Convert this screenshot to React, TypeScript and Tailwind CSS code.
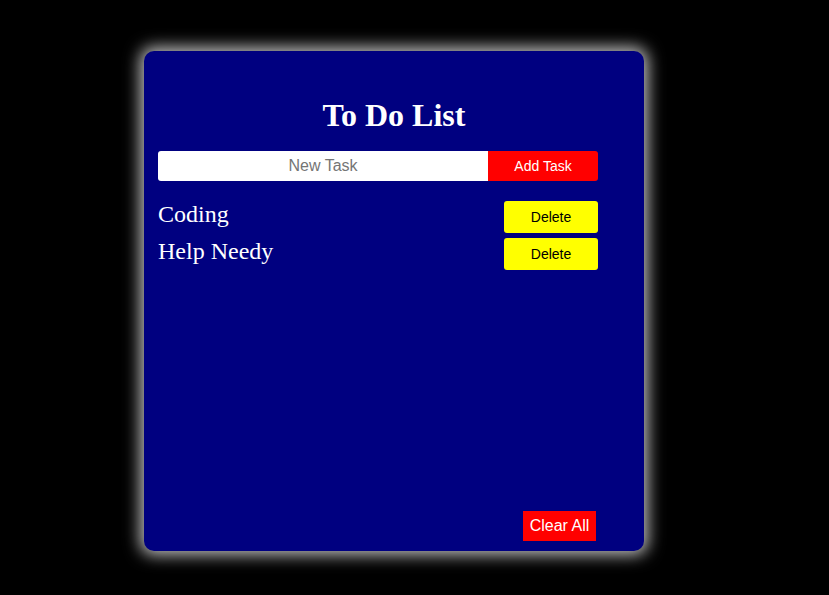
import React, { useState } from 'react';

const App: React.FC = () => {
  const [tasks, setTasks] = useState<string[]>(['Coding', 'Help Needy']);
  const [text, setText] = useState('');

  const addTask = () => {
    if (!text.trim()) return;
    setTasks([...tasks, text.trim()]);
    setText('');
  };

  return (
    <div className="min-h-[595px] w-full bg-black pl-[144px] pt-[51px]">
      <div className="flex h-[500px] w-[500px] flex-col rounded-[10px] bg-[#000080] pb-[10px] pl-[14px] pt-[46px] shadow-[0_0_16px_4px_rgba(255,255,255,0.75)]">
        <h1 className="-ml-[14px] text-center font-['Liberation_Serif',serif] text-[32px] font-bold leading-[36px] text-white">
          To Do List
        </h1>

        <div className="mt-[18px] flex h-[30px] w-[440px]">
          <input
            value={text}
            onChange={(e) => setText(e.target.value)}
            placeholder="New Task"
            className="h-full flex-1 rounded-l-[3px] bg-white text-center font-['Liberation_Sans',sans-serif] text-[16px] text-black outline-none placeholder:text-[#757575]"
          />
          <button
            onClick={addTask}
            className="h-full w-[110px] rounded-r-[3px] bg-[#ff0000] font-['Liberation_Sans',sans-serif] text-[14px] text-white"
          >
            Add Task
          </button>
        </div>

        {/* Tasks */}
        <ul className="mt-[20px] flex w-[440px] flex-col gap-[5px]">
          {tasks.map((t, i) => (
            <li key={i} className="flex items-start justify-between">
              <span className="font-['Liberation_Serif',serif] text-[24px] leading-[27px] text-white">{t}</span>
              <button
                onClick={() => setTasks(tasks.filter((_, j) => j !== i))}
                className="h-[32px] w-[94px] rounded-[3px] bg-[#ffff00] font-['Liberation_Sans',sans-serif] text-[14px] text-black"
              >
                Delete
              </button>
            </li>
          ))}
        </ul>

        <div className="mt-auto flex w-[438px] justify-end">
          <button
            onClick={() => setTasks([])}
            className="h-[30px] w-[73px] bg-[#ff0000] font-['Liberation_Sans',sans-serif] text-[16px] text-white"
          >
            Clear All
          </button>
        </div>
      </div>
    </div>
  );
};

export default App;
